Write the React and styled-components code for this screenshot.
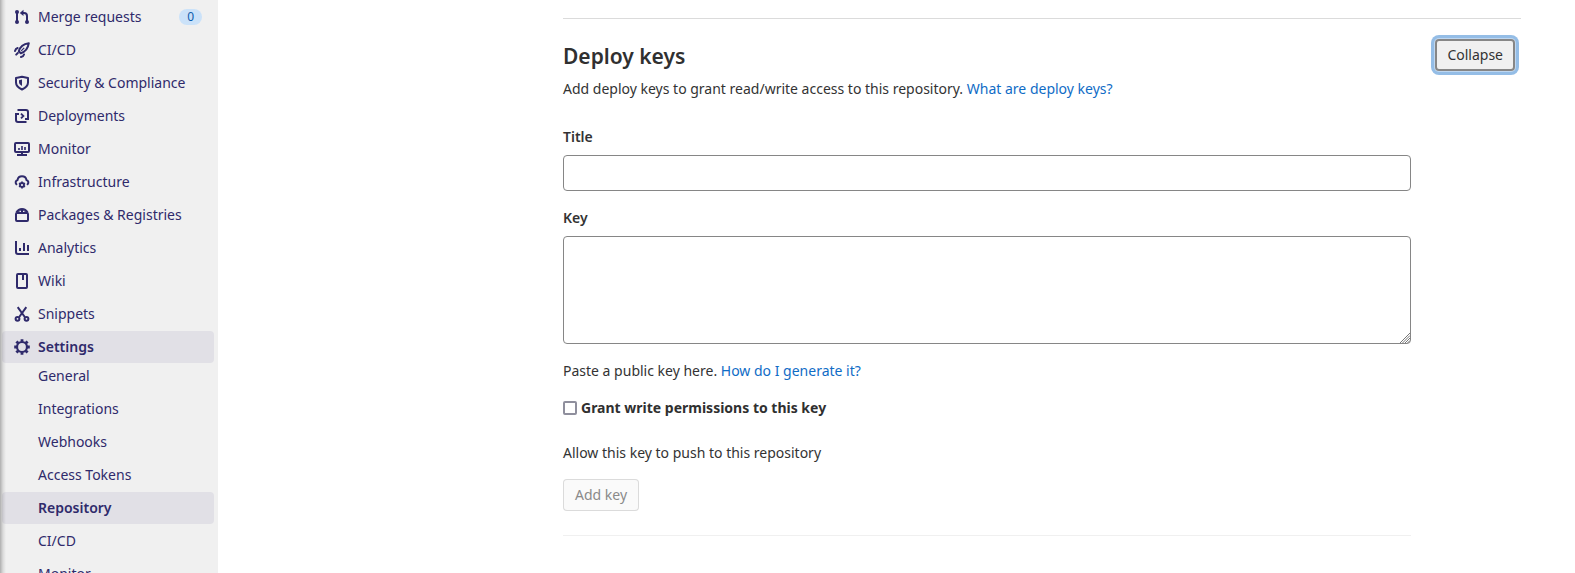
import React from "react";
import styled, { createGlobalStyle, css } from "styled-components";

const GlobalStyle = createGlobalStyle`
  *, *::before, *::after { box-sizing: border-box; }
  body {
    margin: 0;
    background: #fff;
    color: #333;
    font-family: "Noto Sans", "Liberation Sans", sans-serif;
    font-size: 14px;
    line-height: 20px;
  }
`;

const Page = styled.div`
  display: flex;
  height: 573px;
  overflow: hidden;
`;

const Sidebar = styled.nav`
  position: relative;
  flex: none;
  width: 218px;
  padding: 1px 4px 0 2px;
  background: #f0f0f0;
  overflow: hidden;

  &::after {
    content: "";
    position: absolute;
    inset: 0 auto 0 0;
    width: 6px;
    background: linear-gradient(to right, rgba(0, 0, 0, 0.27), rgba(0, 0, 0, 0.09) 50%, rgba(0, 0, 0, 0));
    pointer-events: none;
  }
`;

const NavList = styled.ul`
  display: flex;
  flex-direction: column;
  gap: 1px;
  margin: 0;
  padding: 0;
  list-style: none;
`;

const SubList = styled(NavList)`
  margin-top: -3px;
`;

const NavLink = styled.a`
  display: flex;
  align-items: center;
  height: 32px;
  padding: 0 12px 0 ${(p) => (p.$nested ? "36px" : "12px")};
  border-radius: 4px;
  color: #2f2a6b;
  text-decoration: none;
  ${(p) =>
    p.$active &&
    css`
      background: #e1e0e6;
      font-weight: 600;
    `}
`;

const NavIcon = styled.svg`
  flex: none;
  width: 16px;
  height: 16px;
  margin-right: 8px;
  fill: none;
  stroke: currentColor;
  stroke-width: 2;
`;

const Count = styled.span`
  margin-left: auto;
  padding: 0 8px;
  border-radius: 8px;
  background: #cbe2f9;
  color: #0b5cad;
  font-size: 12px;
  line-height: 16px;
`;

const Main = styled.main`
  flex: 1;
  padding: 18px 54px 0 345px;
`;

const Section = styled.section`
  border-top: 1px solid #dbdbdb;
`;

const SectionHeader = styled.header`
  display: flex;
  justify-content: space-between;
  align-items: flex-start;
  padding: 20px 6px 0 0;
`;

const Heading = styled.h4`
  margin: 3px 0 0;
  color: #303030;
  font-size: 21px;
  font-weight: 600;
  line-height: 28px;
`;

const Intro = styled.p`
  margin: 9px 0 0;
`;

const Link = styled.a`
  color: #106cc6;
  text-decoration: none;
`;

const Button = styled.button`
  flex: none;
  height: 32px;
  padding: 8px 12px;
  border: 0;
  border-radius: 4px;
  background: #fff;
  box-shadow: inset 0 0 0 1px #bfbfbf;
  color: #333;
  font: inherit;
  line-height: 16px;
  ${(p) =>
    p.$focused &&
    css`
      background: #f0f0f0;
      box-shadow: inset 0 0 0 2px #868686, 0 0 0 1px rgba(255, 255, 255, 0.4), 0 0 0 4px rgba(31, 117, 203, 0.48);
    `}
  &:disabled {
    background: #fafafa;
    box-shadow: inset 0 0 0 1px #dbdbdb;
    color: #8a8a8a;
  }
`;

const Form = styled.form`
  display: flex;
  flex-direction: column;
  align-items: flex-start;
  width: 848px;
  padding: 28px 0 24px;
  border-bottom: 1px solid #f0f0f0;
`;

const Label = styled.label`
  margin-bottom: 8px;
  font-weight: 600;
`;

const fieldStyle = css`
  display: block;
  width: 100%;
  border: 1px solid #868686;
  border-radius: 4px;
  background: #fff;
  font: inherit;
  outline: none;
`;

const Input = styled.input`
  ${fieldStyle}
  height: 36px;
  margin-bottom: 17px;
`;

const AreaWrap = styled.div`
  position: relative;
  width: 100%;
`;

const TextArea = styled.textarea`
  ${fieldStyle}
  height: 108px;
  resize: none;
`;

const Grip = styled.svg`
  position: absolute;
  right: 1px;
  bottom: 1px;
  width: 10px;
  height: 10px;
  stroke: #777;
  stroke-width: 1;
`;

const Hint = styled.p`
  margin: ${(p) => p.$top}px 0 0;
`;

const CheckRow = styled.label`
  display: flex;
  align-items: center;
  gap: 4px;
  margin-top: 17px;
  color: #303030;
  font-weight: 700;
`;

const Checkbox = styled.input`
  appearance: none;
  width: 14px;
  height: 14px;
  margin: 0;
  border: 2px solid #8f8f9d;
  border-radius: 2px;
  background: #fff;
`;

const SubmitRow = styled.div`
  margin-top: 16px;
  display: flex;
`;

const icons = {
  merge: (
    <>
      <path d="M3 3v10M7.5 3.9H10a3 3 0 0 1 3 3V13" />
      <path d="M9.5.8v6.2L5.8 3.9z" fill="currentColor" stroke="none" />
      <g fill="currentColor" stroke="none">
        <circle cx="3" cy="3" r="2" />
        <circle cx="3" cy="13" r="2" />
        <circle cx="13" cy="13" r="2" />
      </g>
    </>
  ),
  rocket: (
    <>
      <path d="M4.8 9.2C6 5 9.3 1.9 14.8 1.2 14 6.7 11 10 6.8 11.2z" strokeLinejoin="round" />
      <path d="M7.2 8.8l3-3" strokeWidth="1.2" />
      <path d="M3.6 6C2.2 6.4 1.4 7.4 1 9M10 12.4c-.4 1.4-1.4 2.2-3 2.6M3.8 11l-1.6 1.6" strokeLinecap="round" />
    </>
  ),
  shield: (
    <>
      <path d="M8 1.8 14 3v4.5c0 3.2-2 5.2-6 7-4-1.8-6-3.8-6-7V3z" strokeLinejoin="round" />
      <path d="M8 4.4v6.5C6 9.8 5 8.6 5 7V5.2z" fill="currentColor" stroke="none" />
    </>
  ),
  deploy: (
    <>
      <path d="M3.5 2H12a2 2 0 0 1 2 2v7H11" />
      <path d="M12.5 14H4a2 2 0 0 1-2-2V6H5" />
      <path d="M7 5.6 9.4 8 7 10.4" strokeWidth="1.8" />
    </>
  ),
  monitor: (
    <>
      <rect x="1" y="2" width="14" height="9" rx="1" />
      <path d="M8 11v3M3 14h10" />
      <path d="M5 7v2M8 5v4M11 6v3" strokeWidth="1.6" />
    </>
  ),
  cloud: (
    <>
      <path d="M2.4 10.2A2.5 2.5 0 0 1 3.5 6 4.6 4.6 0 0 1 12.5 6a2.5 2.5 0 0 1 1.1 4.2" strokeLinecap="round" />
      <circle cx="8" cy="11" r="2" strokeWidth="1.8" />
      <path
        d="M8 7.5v1.3M8 13.2v1.3M5 9.25l1.1.65M9.9 12.1l1.1.65M11 9.25l-1.1.65M6.1 12.1l-1.1.65"
        strokeWidth="1.8"
      />
    </>
  ),
  package: (
    <>
      <rect x="2" y="6" width="12" height="8" rx="1" />
      <path d="M2.4 5.4C3.8 3 5.6 2 8 2s4.2 1 5.6 3.4M8 1.8v4" />
      <path d="M4.9 3.4v2.2M11.1 3.4v2.2" strokeWidth="1.2" />
    </>
  ),
  chart: (
    <>
      <path d="M2 1v11a2 2 0 0 0 2 2h11" />
      <path d="M6 8v3M10 3v8M14 5v6" />
    </>
  ),
  book: (
    <>
      <rect x="3" y="1" width="10" height="14" rx="1" />
      <path d="M9 1v6" />
    </>
  ),
  scissors: (
    <>
      <path d="M3.7 1.2 10.8 11M12.3 1.2 5.2 11" />
      <circle cx="3.5" cy="12.8" r="1.9" />
      <circle cx="12.5" cy="12.8" r="1.9" />
    </>
  ),
  gear: (
    <>
      <circle cx="8" cy="8" r="5" strokeWidth="2.2" />
      <path
        d="M8 .2v2.6M8 13.2v2.6M.2 8h2.6M13.2 8h2.6M2.4 2.4l1.9 1.9M11.7 11.7l1.9 1.9M13.6 2.4l-1.9 1.9M4.3 11.7l-1.9 1.9"
        strokeWidth="2.8"
      />
    </>
  ),
};

const items = [
  { icon: "merge", text: "Merge requests", count: 0 },
  { icon: "rocket", text: "CI/CD" },
  { icon: "shield", text: "Security & Compliance" },
  { icon: "deploy", text: "Deployments" },
  { icon: "monitor", text: "Monitor" },
  { icon: "cloud", text: "Infrastructure" },
  { icon: "package", text: "Packages & Registries" },
  { icon: "chart", text: "Analytics" },
  { icon: "book", text: "Wiki" },
  { icon: "scissors", text: "Snippets" },
  {
    icon: "gear",
    text: "Settings",
    active: true,
    children: ["General", "Integrations", "Webhooks", "Access Tokens", "Repository", "CI/CD", "Monitor"],
  },
];

export default function App() {
  return (
    <Page>
      <GlobalStyle />
      <Sidebar>
        <NavList>
          {items.map((item) => (
            <li key={item.text}>
              <NavLink $active={item.active}>
                <NavIcon viewBox="0 0 16 16">{icons[item.icon]}</NavIcon>
                {item.text}
                {item.count !== undefined && <Count>{item.count}</Count>}
              </NavLink>
              {item.children && (
                <SubList>
                  {item.children.map((name) => (
                    <li key={name}>
                      <NavLink $nested $active={name === "Repository"}>
                        {name}
                      </NavLink>
                    </li>
                  ))}
                </SubList>
              )}
            </li>
          ))}
        </NavList>
      </Sidebar>
      <Main>
        <Section>
          <SectionHeader>
            <div>
              <Heading>Deploy keys</Heading>
              <Intro>
                Add deploy keys to grant read/write access to this repository. <Link>What are deploy keys?</Link>
              </Intro>
            </div>
            <Button type="button" $focused>
              Collapse
            </Button>
          </SectionHeader>
          <Form>
            <Label htmlFor="title">Title</Label>
            <Input id="title" />
            <Label htmlFor="key">Key</Label>
            <AreaWrap>
              <TextArea id="key" />
              <Grip viewBox="0 0 10 10">
                <path d="M0 10 10 0M2.5 10 10 2.5M5 10l5-5M7.5 10 10 7.5" />
              </Grip>
            </AreaWrap>
            <Hint $top={17}>
              Paste a public key here. <Link>How do I generate it?</Link>
            </Hint>
            <CheckRow>
              <Checkbox type="checkbox" />
              Grant write permissions to this key
            </CheckRow>
            <Hint $top={25}>Allow this key to push to this repository</Hint>
            <SubmitRow>
              <Button type="button" disabled>
                Add key
              </Button>
            </SubmitRow>
          </Form>
        </Section>
      </Main>
    </Page>
  );
}
